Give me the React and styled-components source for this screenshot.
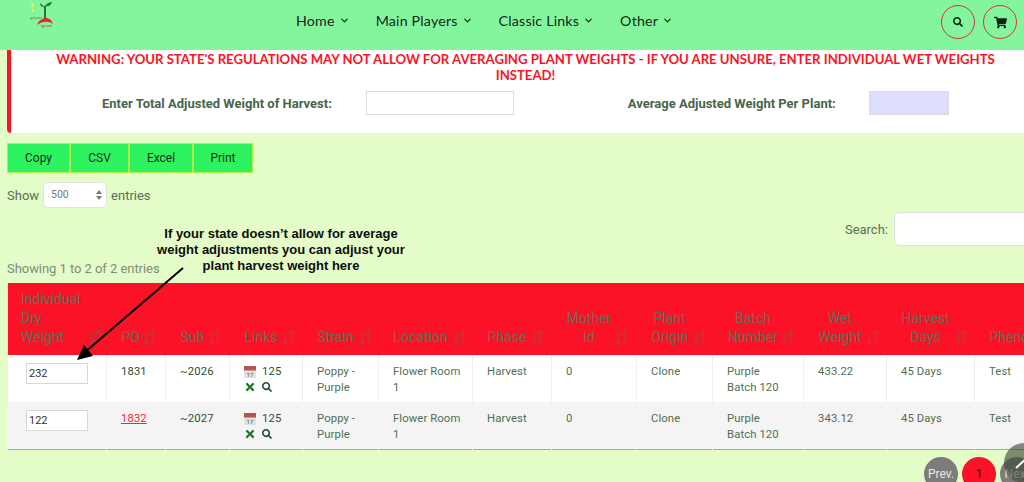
import React from 'react';
import styled, { createGlobalStyle } from 'styled-components';
import { FaSearch, FaShoppingCart, FaTimes } from 'react-icons/fa';
import { FiChevronDown } from 'react-icons/fi';

const GlobalStyle = createGlobalStyle`
  html, body {
    margin: 0;
    padding: 0;
    height: 482px;
    overflow: hidden;
    background: #e4fcc8;
    font-family: Roboto, "Liberation Sans", sans-serif;
  }
`;

const Page = styled.div`
  position: relative;
  width: 1024px;
  height: 482px;
  overflow: hidden;
`;

const Header = styled.header`
  display: flex;
  align-items: flex-start;
  height: 50px;
  padding-left: 29px;
  background: #83f59c;
`;

const Logo = styled.svg`
  width: 26px;
  height: 28px;
  margin-top: 1px;
  flex-shrink: 0;
`;

const Nav = styled.nav`
  display: flex;
  gap: 26px;
  margin-left: 241px;
  margin-top: 11px;
`;

const NavItem = styled.a`
  display: flex;
  align-items: center;
  gap: 4px;
  height: 19px;
  font-family: Lato, sans-serif;
  font-size: 14.2px;
  letter-spacing: 0.2px;
  color: #16241a;
  white-space: nowrap;
`;

const RoundButtons = styled.div`
  display: flex;
  gap: 8px;
  margin-left: auto;
  margin-top: 5px;
  margin-right: 7px;
`;

const RoundButton = styled.button`
  display: flex;
  align-items: center;
  justify-content: center;
  width: 34px;
  height: 34px;
  padding: 0;
  border: 1px solid #d8304a;
  border-radius: 50%;
  background: transparent;
  color: #0b2415;
  font-size: ${({ $size }) => $size}px;
`;

const WarningPanel = styled.section`
  height: 83px;
  margin-left: 7px;
  border-left: 4px solid #fb1227;
  border-bottom-left-radius: 4px;
  background: #fff;
  box-sizing: border-box;
`;

const WarningText = styled.p`
  margin: 0;
  padding: 1px 24px 0 40px;
  text-align: center;
  font-family: Lato, sans-serif;
  font-size: 13.15px;
  font-weight: 700;
  line-height: 16px;
  color: #fb1227;
  white-space: nowrap;
`;

const WeightForm = styled.div`
  display: flex;
  align-items: center;
  margin-top: 8px;
  padding-left: 91px;
`;

const FormLabel = styled.label`
  font-size: 13px;
  font-weight: 700;
  color: #47654a;
  white-space: nowrap;
  margin-right: ${({ $gap }) => $gap}px;
`;

const FormInput = styled.input`
  box-sizing: border-box;
  width: ${({ $width }) => $width}px;
  height: 24px;
  margin-right: ${({ $gap }) => $gap || 0}px;
  border: 1px solid #dcdcdc;
  background: ${({ $bg }) => $bg || '#fff'};
`;

const ButtonBar = styled.div`
  display: flex;
  margin: 10px 0 0 7px;
`;

const ExportButton = styled.button`
  box-sizing: border-box;
  width: ${({ $width }) => $width}px;
  height: 30px;
  padding: 0;
  border: 1px solid #b4ee4a;
  background: #2cf35f;
  font-family: Roboto, sans-serif;
  font-size: 12px;
  color: #1c2a1c;
`;

const ShowRow = styled.div`
  display: flex;
  align-items: center;
  gap: 4px;
  height: 26px;
  margin: 9px 0 0 7px;
  font-size: 13px;
  color: #56705a;
`;

const SelectBox = styled.div`
  position: relative;
  box-sizing: border-box;
  width: 64px;
  height: 26px;
  padding-left: 7px;
  border: 1px solid #e2e2e2;
  border-radius: 5px;
  background: #fff;
  font-size: 10.5px;
  line-height: 24px;
  color: #777;
`;

const SelectArrows = styled.svg`
  position: absolute;
  right: 4px;
  top: 7px;
  width: 6px;
  height: 10px;
`;

const SearchRow = styled.div`
  display: flex;
  align-items: center;
  justify-content: flex-end;
  gap: 6px;
  height: 34px;
  margin: 4px -20px 0 0;
  font-size: 13px;
  color: #56705a;
`;

const SearchInput = styled.input`
  box-sizing: border-box;
  width: 150px;
  height: 34px;
  border: 1px solid #dedede;
  border-radius: 5px;
  background: #fff;
`;

const Showing = styled.div`
  margin: 14px 0 0 7px;
  height: 23px;
  font-size: 13px;
  line-height: 17px;
  letter-spacing: -0.05px;
  color: #7d8d79;
`;

const Annotation = styled.div`
  position: absolute;
  left: 141px;
  top: 226px;
  width: 280px;
  text-align: center;
  font-family: "Liberation Sans", Arial, sans-serif;
  font-size: 13px;
  font-weight: 700;
  line-height: 16px;
  color: #0d0d0d;
`;

const ArrowOverlay = styled.svg`
  position: absolute;
  left: 70px;
  top: 262px;
  width: 120px;
  height: 104px;
`;

const Table = styled.table`
  width: 1116px;
  margin-left: 7px;
  table-layout: fixed;
  border-collapse: collapse;
  border-left: 1px solid #dcdcdc;
  border-bottom: 1px solid #f08a8a;
`;

const HeadRow = styled.tr`
  height: 72px;
  background: #fb1227;
`;

const HeadCell = styled.th`
  position: relative;
  box-sizing: border-box;
  vertical-align: bottom;
  padding: 0 25px 8px 15px;
  font-size: 14px;
  font-weight: 400;
  line-height: 19px;
  color: #5f6f58;
  white-space: nowrap;
  text-align: ${({ $left }) => ($left ? 'left' : 'center')};

  &:first-child {
    padding-left: 13px;
  }
`;

const HeadLabel = styled.span`
  display: block;
`;

const SortIcon = styled.svg`
  position: absolute;
  right: ${({ $right }) => $right ?? 8}px;
  bottom: 10px;
  width: 13px;
  height: 15px;
`;

const BodyRow = styled.tr`
  height: 47px;
  background: ${({ $shaded }) => ($shaded ? '#f4f4f4' : '#fff')};
`;

const Cell = styled.td`
  box-sizing: border-box;
  vertical-align: top;
  padding: 9px ${({ $tight }) => ($tight ? 6 : 12)}px 0 14px;
  border-left: 1px solid ${({ $shaded }) => ($shaded ? '#f4f4f4' : '#efefef')};
  font-size: 11.3px;
  line-height: 15.5px;
  letter-spacing: 0.1px;
  color: ${({ $dark }) => ($dark ? '#2f4f35' : '#4f6f53')};
`;

const WeightInput = styled.input`
  box-sizing: border-box;
  display: block;
  width: 62px;
  height: 21px;
  margin: -1px 0 0 4px;
  padding: 0 2px;
  border: 1px solid #d8d8d8;
  background: #fff;
  font-family: Roboto, sans-serif;
  font-size: 11px;
  color: #333;
`;

const RedLink = styled.a`
  color: #f3263c;
  text-decoration: underline;
`;

const LinkLine = styled.div`
  display: flex;
  align-items: center;
  gap: 6px;
  height: 15.5px;
`;

const RemoveIcon = styled(FaTimes)`
  width: 12px;
  height: 12px;
  color: #1c7a2e;
`;

const FindIcon = styled(FaSearch)`
  width: 10px;
  height: 10px;
  color: #1f4a2a;
`;

const Pager = styled.div`
  display: flex;
  justify-content: flex-end;
  gap: 4px;
  margin: 7px -10px 0 0;
`;

const PageCircle = styled.div`
  display: flex;
  align-items: center;
  justify-content: center;
  flex-shrink: 0;
  width: 34px;
  height: 34px;
  border-radius: 50%;
  overflow: hidden;
  font-size: 12px;
  white-space: nowrap;
  background: ${({ $active }) => ($active ? '#fb1227' : '#7c7c7c')};
  color: ${({ $active }) => ($active ? '#222' : '#e8e8e8')};
`;

const ScrollTop = styled.svg`
  position: absolute;
  left: 1004px;
  top: 443px;
  width: 40px;
  height: 40px;
  border-radius: 50%;
  background: rgba(60, 70, 50, 0.62);
`;

const CalendarSvg = styled.svg`
  width: 12px;
  height: 12px;
  flex-shrink: 0;
`;

const columns = [
  { label: ['Individual', 'Dry', 'Weight'], width: 99, left: true, right: 5, sortColor: '#b03a40' },
  { label: ['PO'], width: 59, left: true, right: 10 },
  { label: ['Sub'], width: 64, left: true, right: 9 },
  { label: ['Links'], width: 73, left: true, right: 8 },
  { label: ['Strain'], width: 76, left: true, right: 7 },
  { label: ['Location'], width: 94, left: true, right: 7 },
  { label: ['Phase'], width: 79, left: true, right: 8 },
  { label: ['Mother', 'Id'], width: 85, right: 9 },
  { label: ['Plant', 'Origin'], width: 76, right: 7 },
  { label: ['Batch', 'Number'], width: 91, right: 10 },
  { label: ['Wet', 'Weight'], width: 83, right: 8 },
  { label: ['Harvest', 'Days'], width: 88, right: 7 },
  { label: ['Pheno'], width: 149, left: true, noSort: true },
];

const rows = [
  { weight: '232', po: '1831', sub: '~2026', wet: '433.22' },
  { weight: '122', po: '1832', sub: '~2027', wet: '343.12', link: true },
];

function SortArrows({ right, color = '#d0303c' }) {
  return (
    <SortIcon $right={right} viewBox="0 0 13 15">
      <path d="M3.5 14V2M1 11 3.5 14 6 11M9.5 1v12M7 4 9.5 1 12 4" fill="none" stroke={color} strokeWidth="1.6" />
    </SortIcon>
  );
}

function Calendar() {
  return (
    <CalendarSvg viewBox="0 0 12 12">
      <rect x="0" y="0" width="12" height="12" fill="#dfe3de" />
      <rect x="0" y="0" width="12" height="4.5" fill="#b5564e" />
      <text x="6" y="10.8" textAnchor="middle" fontSize="6" fill="#555" fontFamily="Roboto, sans-serif">17</text>
    </CalendarSvg>
  );
}

function App() {
  return (
    <Page>
      <GlobalStyle />
      <Header>
        <Logo viewBox="0 0 26 28">
          <path d="M2 1l1 4-1 2 2-1 1-3z" fill="#eef25a" />
          <path d="M3 8l1 3" stroke="#eef25a" strokeWidth="1.5" />
          <path d="M16 20c0-5 0-10 0-15" stroke="#1d7a34" strokeWidth="2" fill="none" />
          <path d="M16 6C14 4 12 3 11 2c0 3 2 4 5 4zM16 5c2-3 5-4 7-4-1 3-3 5-7 4z" fill="#1d7a34" />
          <path d="M8 24c2-5 6-7 9-7s6 2 7 6c-4-3-10-3-16 1z" fill="#f0203a" />
          <text x="1" y="18" fontSize="4" fill="#5c7a5c" fontFamily="Roboto, sans-serif">grower</text>
          <text x="12" y="26" fontSize="4" fill="#d8203a" fontFamily="Roboto, sans-serif">ignore</text>
        </Logo>
        <Nav>
          {['Home', 'Main Players', 'Classic Links', 'Other'].map((item) => (
            <NavItem key={item}>
              {item}
              <FiChevronDown size={11} strokeWidth={2.5} />
            </NavItem>
          ))}
        </Nav>
        <RoundButtons>
          <RoundButton $size={10}><FaSearch /></RoundButton>
          <RoundButton $size={13}><FaShoppingCart /></RoundButton>
        </RoundButtons>
      </Header>

      <WarningPanel>
        <WarningText>
          WARNING: YOUR STATE'S REGULATIONS MAY NOT ALLOW FOR AVERAGING PLANT WEIGHTS - IF YOU ARE UNSURE, ENTER INDIVIDUAL WET WEIGHTS
          <br />
          INSTEAD!
        </WarningText>
        <WeightForm>
          <FormLabel $gap={34}>Enter Total Adjusted Weight of Harvest:</FormLabel>
          <FormInput $width={148} $gap={114} />
          <FormLabel $gap={33}>Average Adjusted Weight Per Plant:</FormLabel>
          <FormInput $width={80} $bg="#dcdefb" />
        </WeightForm>
      </WarningPanel>

      <ButtonBar>
        <ExportButton $width={63}>Copy</ExportButton>
        <ExportButton $width={59}>CSV</ExportButton>
        <ExportButton $width={64}>Excel</ExportButton>
        <ExportButton $width={60}>Print</ExportButton>
      </ButtonBar>

      <ShowRow>
        Show
        <SelectBox>
          500
          <SelectArrows viewBox="0 0 6 10">
            <path d="M3 0l3 4H0zM3 10l3-4H0z" fill="#777" />
          </SelectArrows>
        </SelectBox>
        entries
      </ShowRow>

      <SearchRow>
        Search:
        <SearchInput />
      </SearchRow>

      <Showing>Showing 1 to 2 of 2 entries</Showing>

      <Table>
        <colgroup>
          {columns.map((col) => (
            <col key={col.label.join()} width={col.width} />
          ))}
        </colgroup>
        <thead>
          <HeadRow>
            {columns.map((col) => (
              <HeadCell key={col.label.join()} $left={col.left}>
                {col.label.map((line) => (
                  <HeadLabel key={line}>{line}</HeadLabel>
                ))}
                {!col.noSort && <SortArrows right={col.right} color={col.sortColor} />}
              </HeadCell>
            ))}
          </HeadRow>
        </thead>
        <tbody>
          {rows.map((row, i) => {
            const shaded = i === 1;
            return (
              <BodyRow key={row.po} $shaded={shaded}>
                <Cell $shaded={shaded}><WeightInput defaultValue={row.weight} /></Cell>
                <Cell $shaded={shaded} $dark>{row.link ? <RedLink>{row.po}</RedLink> : row.po}</Cell>
                <Cell $shaded={shaded} $dark>{row.sub}</Cell>
                <Cell $shaded={shaded} $dark>
                  <LinkLine><Calendar />125</LinkLine>
                  <LinkLine><RemoveIcon /><FindIcon /></LinkLine>
                </Cell>
                <Cell $shaded={shaded}>Poppy - Purple</Cell>
                <Cell $shaded={shaded} $tight>Flower Room 1</Cell>
                <Cell $shaded={shaded}>Harvest</Cell>
                <Cell $shaded={shaded}>0</Cell>
                <Cell $shaded={shaded}>Clone</Cell>
                <Cell $shaded={shaded}>Purple Batch 120</Cell>
                <Cell $shaded={shaded}>{row.wet}</Cell>
                <Cell $shaded={shaded}>45 Days</Cell>
                <Cell $shaded={shaded}>Test</Cell>
              </BodyRow>
            );
          })}
        </tbody>
      </Table>

      <Pager>
        <PageCircle>Prev.</PageCircle>
        <PageCircle $active>1</PageCircle>
        <PageCircle>Next</PageCircle>
      </Pager>

      <Annotation>
        If your state doesn’t allow for average
        <br />
        weight adjustments you can adjust your
        <br />
        plant harvest weight here
      </Annotation>
      <ArrowOverlay viewBox="0 0 120 104">
        <line x1="113" y1="6" x2="14" y2="91" stroke="#000" strokeWidth="2" />
        <polygon points="7,98 14,83 23,94" fill="#000" />
      </ArrowOverlay>
      <ScrollTop viewBox="0 0 40 40">
        <line x1="12" y1="25" x2="24" y2="14" stroke="#fff" strokeWidth="2" />
      </ScrollTop>
    </Page>
  );
}

export default App;
